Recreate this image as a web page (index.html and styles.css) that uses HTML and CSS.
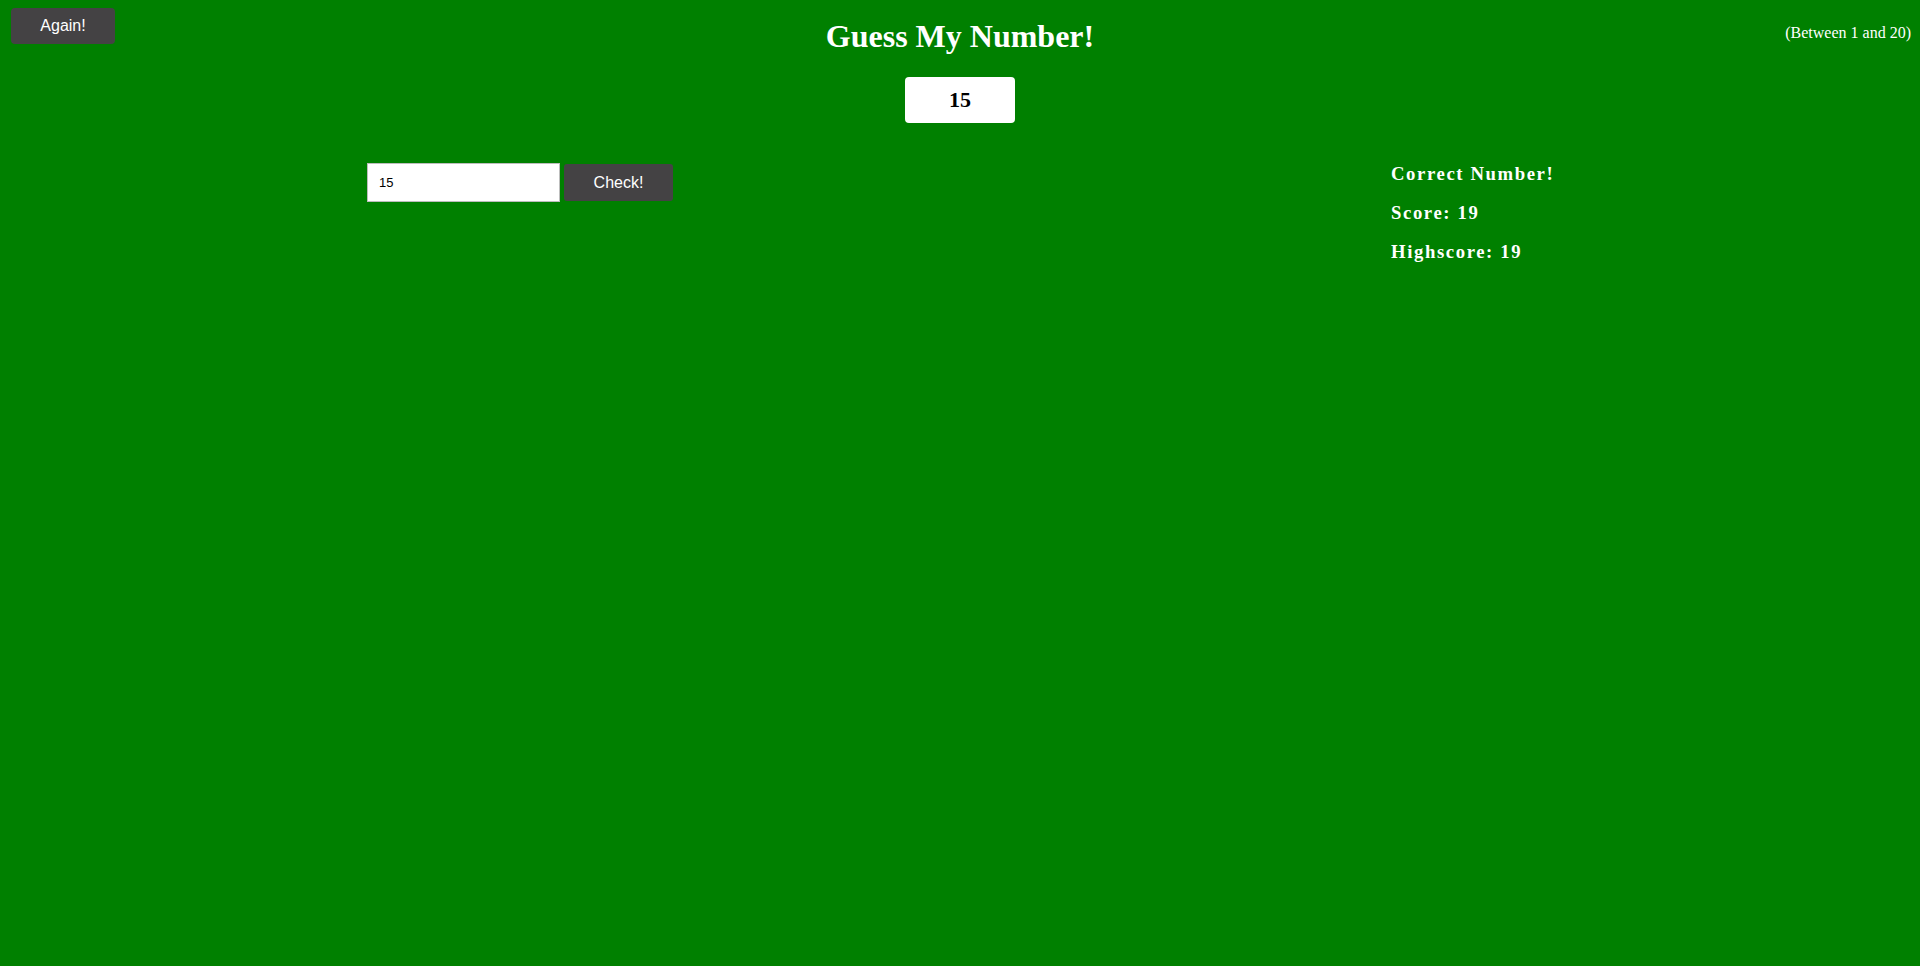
FILE: index.html
```html
<!DOCTYPE html>
<html lang="en">
<head>
<meta charset="utf-8">
<title>Guess My Number!</title>
<link rel="stylesheet" href="styles.css">
</head>
<body>
<header class="top">
  <div class="top-left"><button class="btn btn-again">Again!</button></div>
  <h1 class="title">Guess My Number!</h1>
  <p class="between">(Between 1 and 20)</p>
</header>
<div class="number-row"><div class="number">15</div></div>
<main class="game">
  <section class="left">
    <input class="guess" type="number" value="15">
    <button class="btn btn-check">Check!</button>
  </section>
  <section class="right">
    <p class="message">Correct Number!</p>
    <p class="label-score">Score: <span class="score">19</span></p>
    <p class="label-highscore">Highscore: <span class="highscore">19</span></p>
  </section>
</main>
</body>
</html>
```
FILE: styles.css
```css
html, body {
  margin: 0;
  padding: 0;
}
body {
  background: #008000;
  color: #fff;
  font-family: "Liberation Serif", "Times New Roman", serif;
  min-height: 966px;
}
.top {
  display: grid;
  grid-template-columns: 1fr auto 1fr;
  align-items: start;
}
.top-left {
  padding: 8px 0 0 11px;
}
.btn {
  background: #444244;
  color: #fff;
  border: none;
  font-family: "Liberation Sans", Arial, sans-serif;
  font-size: 16px;
  border-radius: 3px;
  cursor: pointer;
  padding: 0;
}
.btn-again {
  width: 104px;
  height: 36px;
  border-radius: 4px;
}
.title {
  margin: 18px 0 0;
  font-size: 32px;
  font-weight: bold;
  line-height: 37px;
  text-align: center;
}
.between {
  margin: 24px 0 0;
  justify-self: end;
  padding-right: 9px;
  font-size: 16px;
  line-height: 18px;
}
.number-row {
  display: flex;
  justify-content: center;
  padding-top: 22px;
}
.number {
  width: 110px;
  height: 46px;
  background: #fff;
  color: #000;
  border-radius: 4px;
  font-size: 22px;
  font-weight: bold;
  display: flex;
  align-items: center;
  justify-content: center;
}
.game {
  display: flex;
  justify-content: space-around;
  margin: 40px 8px 0;
  align-items: flex-start;
}
.left {
  display: flex;
  gap: 4px;
  align-items: flex-start;
}
.guess {
  width: 193px;
  height: 39px;
  box-sizing: border-box;
  border: 1px solid #bdbdbd;
  background: #fff;
  padding: 0 11px;
  font-family: "Liberation Sans", Arial, sans-serif;
  font-size: 13px;
  color: #000;
  outline: none;
  -moz-appearance: textfield;
}
.guess::-webkit-outer-spin-button,
.guess::-webkit-inner-spin-button {
  -webkit-appearance: none;
  margin: 0;
}
.btn-check {
  width: 109px;
  height: 37px;
  margin-top: 1px;
}
.right {
  width: 162px;
}
.right p {
  margin: 0 0 18px;
  font-size: 18.72px;
  line-height: 21px;
  font-weight: bold;
  letter-spacing: 1.6px;
  white-space: nowrap;
}
```
